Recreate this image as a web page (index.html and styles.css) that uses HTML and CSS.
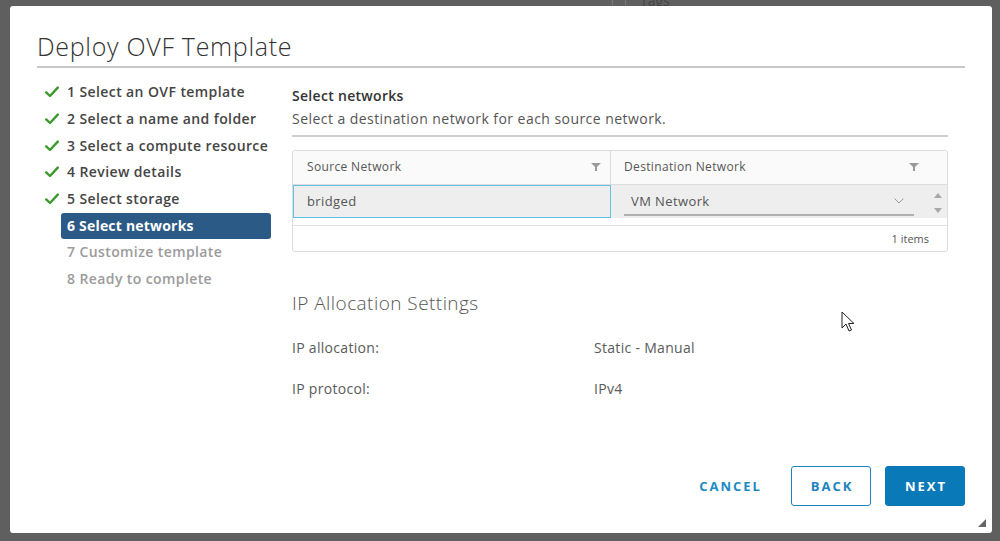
FILE: index.html
```html
<!DOCTYPE html>
<html>
<head>
<meta charset="utf-8">
<link rel="stylesheet" href="styles.css">
</head>
<body>
<div class="backdrop-peek">
  <span class="peek-caret">&#8963;</span>
  <span class="peek-sep"></span>
  <span class="peek-sep"></span>
  <span class="peek-text">Tags</span>
</div>
<div class="modal">
  <header class="modal-header">
    <h1 class="modal-title">Deploy OVF Template</h1>
  </header>
  <div class="modal-body">
    <nav class="steps">
      <div class="step done"><span class="check"><svg viewBox="0 0 14 12" width="14" height="12"><path d="M1.2 6.4 L5 10 L12.8 1.6" fill="none" stroke="#3c9a2c" stroke-width="2.4" stroke-linecap="round" stroke-linejoin="round"/></svg></span><span class="step-label">1 Select an OVF template</span></div>
      <div class="step done"><span class="check"><svg viewBox="0 0 14 12" width="14" height="12"><path d="M1.2 6.4 L5 10 L12.8 1.6" fill="none" stroke="#3c9a2c" stroke-width="2.4" stroke-linecap="round" stroke-linejoin="round"/></svg></span><span class="step-label">2 Select a name and folder</span></div>
      <div class="step done"><span class="check"><svg viewBox="0 0 14 12" width="14" height="12"><path d="M1.2 6.4 L5 10 L12.8 1.6" fill="none" stroke="#3c9a2c" stroke-width="2.4" stroke-linecap="round" stroke-linejoin="round"/></svg></span><span class="step-label">3 Select a compute resource</span></div>
      <div class="step done"><span class="check"><svg viewBox="0 0 14 12" width="14" height="12"><path d="M1.2 6.4 L5 10 L12.8 1.6" fill="none" stroke="#3c9a2c" stroke-width="2.4" stroke-linecap="round" stroke-linejoin="round"/></svg></span><span class="step-label">4 Review details</span></div>
      <div class="step done"><span class="check"><svg viewBox="0 0 14 12" width="14" height="12"><path d="M1.2 6.4 L5 10 L12.8 1.6" fill="none" stroke="#3c9a2c" stroke-width="2.4" stroke-linecap="round" stroke-linejoin="round"/></svg></span><span class="step-label">5 Select storage</span></div>
      <div class="step active"><span class="check"></span><span class="step-label">6 Select networks</span></div>
      <div class="step todo"><span class="check"></span><span class="step-label">7 Customize template</span></div>
      <div class="step todo"><span class="check"></span><span class="step-label">8 Ready to complete</span></div>
    </nav>
    <main class="content">
      <div class="page-head">
        <div class="page-title">Select networks</div>
        <div class="page-desc">Select a destination network for each source network.</div>
      </div>
      <div class="grid">
        <div class="grid-head">
          <div class="col col-src">Source Network<svg class="filter" viewBox="0 0 10 8" width="10" height="8"><path d="M0 0 H10 L6 4 V8 H4 V4 Z" fill="#9a9a9a"/></svg></div>
          <div class="col col-dst">Destination Network<svg class="filter" viewBox="0 0 10 8" width="10" height="8"><path d="M0 0 H10 L6 4 V8 H4 V4 Z" fill="#9a9a9a"/></svg></div>
        </div>
        <div class="grid-body">
          <div class="grid-row">
            <div class="cell cell-src">bridged</div>
            <div class="cell cell-dst">
              <div class="select">VM Network<svg class="chev" viewBox="0 0 10 6" width="10" height="6"><path d="M0.5 0.5 L5 5 L9.5 0.5" fill="none" stroke="#9a9a9a" stroke-width="1"/></svg></div>
            </div>
          </div>
          <div class="scrollbar">
            <svg viewBox="0 0 8 5" width="8" height="5"><path d="M0 5 L4 0 L8 5 Z" fill="#a8a8a8"/></svg>
            <svg viewBox="0 0 8 5" width="8" height="5"><path d="M0 0 L4 5 L8 0 Z" fill="#a8a8a8"/></svg>
          </div>
        </div>
        <div class="grid-foot">1 items</div>
      </div>
      <section class="ip">
        <h2 class="ip-title">IP Allocation Settings</h2>
        <div class="ip-row"><span class="ip-label">IP allocation:</span><span class="ip-value">Static - Manual</span></div>
        <div class="ip-row"><span class="ip-label">IP protocol:</span><span class="ip-value">IPv4</span></div>
      </section>
    </main>
  </div>
  <footer class="modal-footer">
    <button class="btn btn-link">CANCEL</button>
    <button class="btn btn-outline">BACK</button>
    <button class="btn btn-primary">NEXT</button>
  </footer>
  <svg class="grip" viewBox="0 0 8 8" width="8" height="8"><path d="M8 0 L8 8 L0 8 Z" fill="#666"/></svg>
</div>
<svg class="cursor" viewBox="0 0 14 22" width="14" height="22"><path d="M1 1 L1 17 L5 13 L8 20 L10.5 19 L7.5 12.5 L13 12.5 Z" fill="#fff" stroke="#222" stroke-width="1" stroke-linejoin="round"/></svg>
</body>
</html>
```
FILE: styles.css
```css
html, body {
  margin: 0;
  padding: 0;
}
body {
  background: #5f5f5f;
  font-family: "Open Sans", "Liberation Sans", sans-serif;
  color: #333;
  width: 1000px;
  height: 541px;
  overflow: hidden;
  position: relative;
}
.backdrop-peek {
  position: absolute;
  top: -8px;
  left: 582px;
  display: flex;
  align-items: center;
  color: #2f4f6f;
  font-size: 14px;
  height: 16px;
}
.peek-caret { color: #22466b; font-size: 14px; margin-right: 18px; }
.peek-sep { width: 1px; height: 14px; background: #777; margin-right: 12px; }
.peek-text { color: #444; margin-left: 2px; }

.modal {
  margin: 6px 8px 8px 10px;
  width: 982px;
  height: 527px;
  background: #fff;
  border-radius: 3px;
  display: flex;
  flex-direction: column;
  position: relative;
  box-sizing: border-box;
}
.modal-header {
  padding: 23px 27px 0 27px;
}
.modal-title {
  margin: 0;
  font-weight: 300;
  font-size: 25px;
  line-height: 34px;
  color: #333;
  padding-bottom: 3px;
  border-bottom: 2px solid #c8c8c8;
  letter-spacing: 0.7px;
}
.modal-body {
  flex: 1;
  display: flex;
  padding: 11px 44px 0 27px;
  gap: 21px;
}
.steps {
  width: 234px;
  flex: none;
  display: flex;
  flex-direction: column;
}
.step {
  display: flex;
  align-items: center;
  height: 26.7px;
}
.check {
  width: 24px;
  flex: none;
  display: flex;
  padding-left: 8px;
  box-sizing: border-box;
}
.step-label {
  flex: 1;
  height: 26px;
  line-height: 26px;
  padding: 0 6px;
  border-radius: 3px;
  font-size: 14px;
  font-weight: 600;
  letter-spacing: 0.4px;
  color: #454545;
  white-space: nowrap;
}
.step.active .step-label {
  background: #2c5a86;
  color: #fff;
  font-weight: 700;
  letter-spacing: 0.2px;
}
.step.todo .step-label {
  color: #9b9b9b;
}
.content {
  flex: 1;
  min-width: 0;
}
.page-head {
  padding-top: 7px;
  padding-bottom: 3px;
  border-bottom: 2px solid #cfcfcf;
}
.page-title {
  font-size: 14px;
  font-weight: 600;
  letter-spacing: 0.3px;
  line-height: 20px;
  color: #333;
}
.page-desc {
  font-size: 14px;
  letter-spacing: 0.45px;
  line-height: 26px;
  color: #555;
  margin-top: 0;
}
.grid {
  margin-top: 13px;
  border: 1px solid #dcdcdc;
  border-radius: 3px;
}
.grid-head {
  display: flex;
  height: 33px;
  background: #fafafa;
  border-bottom: 1px solid #dcdcdc;
  border-radius: 3px 3px 0 0;
}
.col {
  display: flex;
  align-items: center;
  justify-content: space-between;
  font-size: 12px;
  letter-spacing: 0.35px;
  color: #565656;
  box-sizing: border-box;
  padding-bottom: 2px;
}
.col-src {
  width: 318px;
  padding-left: 14px;
  padding-right: 9px;
  border-right: 1px solid #dcdcdc;
}
.col-dst {
  flex: 1;
  padding-left: 13px;
  padding-right: 28px;
}
.filter { flex: none; }
.grid-body {
  display: flex;
  height: 40px;
  border-bottom: 1px solid #e0e0e0;
}
.grid-row {
  flex: 1;
  display: flex;
  height: 33px;
  background: #eee;
}
.cell {
  box-sizing: border-box;
  font-size: 13px;
  letter-spacing: 0.4px;
  color: #555;
  display: flex;
  align-items: center;
}
.cell-src {
  width: 318px;
  padding-left: 13px;
  padding-bottom: 2px;
  border: 1.5px solid #63c1e8;
}
.cell-dst {
  flex: 1;
  padding: 0 14px 0 13px;
}
.select {
  flex: 1;
  height: 28px;
  display: flex;
  align-items: center;
  justify-content: space-between;
  padding: 0 10px 0 7px;
  border-bottom: 2px solid #b0b0b0;
  box-sizing: border-box;
  margin-top: 1px;
}
.chev { flex: none; }
.scrollbar {
  width: 19px;
  height: 33px;
  background: #eee;
  display: flex;
  flex-direction: column;
  align-items: center;
  justify-content: space-between;
  padding: 8px 0 5px;
  box-sizing: border-box;
}
.grid-foot {
  height: 25px;
  line-height: 25px;
  text-align: right;
  padding-right: 18px;
  font-size: 11px;
  color: #565656;
}
.ip {
  margin-top: 39px;
}
.ip-title {
  margin: 0;
  font-size: 19px;
  font-weight: 300;
  letter-spacing: 0.45px;
  line-height: 24px;
  color: #555;
}
.ip-row {
  display: flex;
  font-size: 14px;
  letter-spacing: 0.3px;
  color: #5a5a5a;
  height: 41px;
  align-items: center;
}
.ip-row:first-of-type { margin-top: 12px; }
.ip-label { width: 302px; }
.modal-footer {
  display: flex;
  justify-content: flex-end;
  align-items: center;
  gap: 14px;
  padding: 0 27px 27px 0;
}
.btn {
  font-family: "Open Sans", "Liberation Sans", sans-serif;
  font-size: 13px;
  font-weight: 700;
  letter-spacing: 2px;
  height: 40px;
  border-radius: 3px;
  box-sizing: border-box;
  cursor: pointer;
  padding: 0 0 0 2px;
}
.btn-link {
  background: none;
  border: none;
  color: #1b8ac2;
  width: 89px;
  margin-right: 3px;
}
.btn-outline {
  width: 80px;
  background: #fff;
  border: 1px solid #1b84bd;
  color: #1b84bd;
}
.btn-primary {
  width: 80px;
  background: #0a79b8;
  border: 1px solid #0a79b8;
  color: #fff;
}
.grip {
  position: absolute;
  right: 6px;
  bottom: 6px;
}
.cursor {
  position: absolute;
  left: 841px;
  top: 311px;
}
```
